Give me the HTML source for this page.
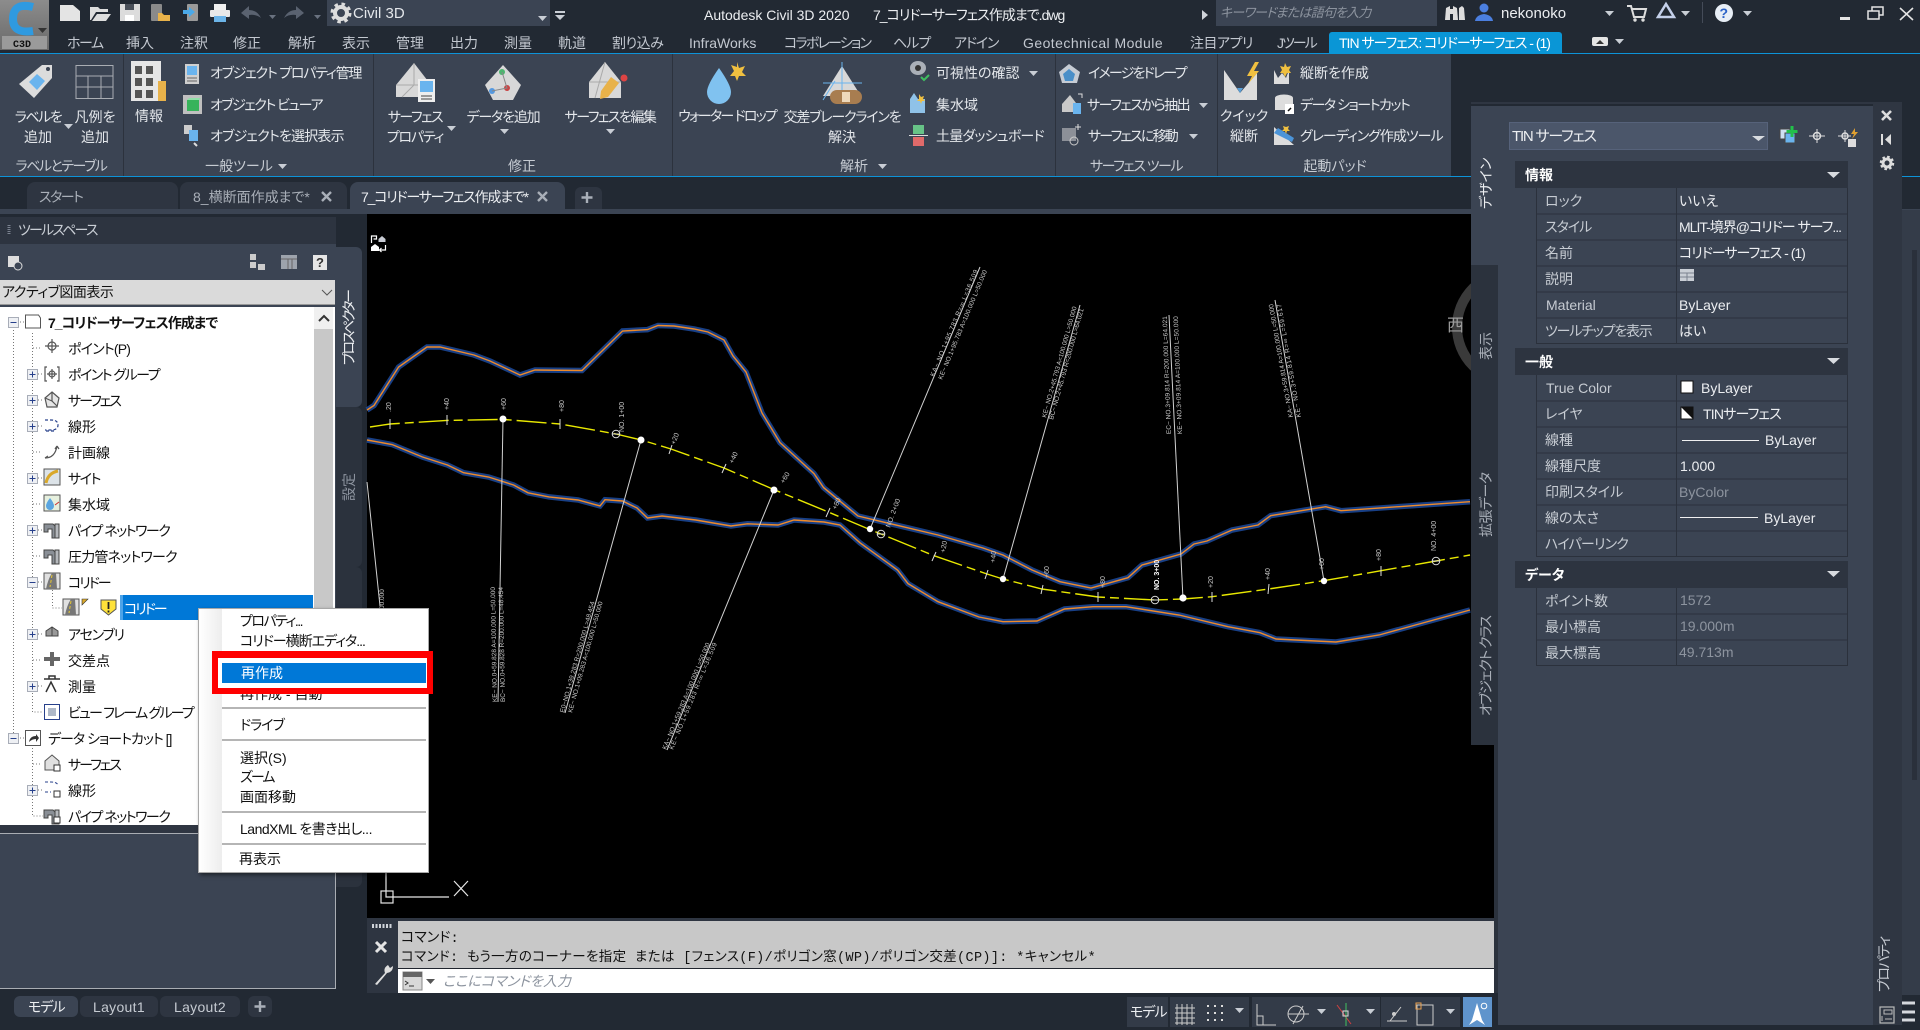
<!DOCTYPE html>
<html lang="ja"><head><meta charset="utf-8"><title>Autodesk Civil 3D 2020</title>
<style>
html,body{margin:0;padding:0;width:1920px;height:1030px;overflow:hidden;background:#222933}
body{position:relative;font-family:"Liberation Sans","Noto Sans CJK JP",sans-serif;font-feature-settings:"palt";font-size:14px;color:#e4e7eb}
div{position:absolute}
.t{position:absolute;white-space:nowrap;line-height:16px;height:16px}
.c{transform:translateX(-50%)}
.m{color:#c3c8d0}
.b{color:#111}
.g{color:#8d949f}
.l{color:#c6cbd2}
.w{color:#eceef1}
.r{transform-origin:0 0;transform:rotate(-90deg)}
.k05{letter-spacing:-.5px}
.k08{letter-spacing:-.8px}
.k1{letter-spacing:-1px}
.k12{letter-spacing:-1.2px}
.k15{letter-spacing:-1.5px}
.k18{letter-spacing:-1.8px}
.k2{letter-spacing:-2px}
svg{position:absolute;left:0;top:0}
</style></head><body>
<!-- base panels -->
<div style="left:0;top:53px;width:1451px;height:124px;background:#3b4453"></div>
<div style="left:0;top:53px;width:1920px;height:1px;background:#0d93d8"></div>
<div style="left:0;top:176px;width:1451px;height:1px;background:#0d93d8"></div>
<div style="left:1451px;top:176px;width:469px;height:1px;background:#0d93d8"></div>
<div style="left:0;top:209px;width:1920px;height:5px;background:#3b4453"></div>
<div style="left:27px;top:182px;width:151px;height:27px;background:#2e3541;border-radius:8px 8px 0 0"></div>
<div style="left:180px;top:182px;width:167px;height:27px;background:#2e3541;border-radius:8px 8px 0 0"></div>
<div style="left:350px;top:182px;width:215px;height:32px;background:#3b4453;border-radius:8px 8px 0 0"></div>
<div style="left:575px;top:187px;width:27px;height:22px;background:#2e3541;border-radius:6px 6px 0 0"></div>
<div style="left:0;top:214px;width:367px;height:780px;background:#222933"></div>
<!-- left panel -->
<div style="left:0;top:217px;width:336px;height:27px;background:#2d3440"></div>
<div style="left:0;top:244px;width:336px;height:744px;background:#3b4453"></div>
<div style="left:336px;top:247px;width:26px;height:160px;background:#3b4453;border-radius:0 6px 6px 0"></div>
<div style="left:336px;top:407px;width:26px;height:160px;background:#2b323d;border-radius:0 6px 6px 0"></div>
<div style="left:336px;top:567px;width:26px;height:320px;background:#2b323d;border-radius:0 6px 6px 0"></div>
<div style="left:0;top:280px;width:335px;height:24px;background:#dadada;border-bottom:1px solid #999"></div>
<div style="left:0;top:307px;width:335px;height:518px;background:#fff"></div>
<div style="left:314px;top:307px;width:19px;height:518px;background:#c8c8c8"></div>
<div style="left:314px;top:307px;width:19px;height:22px;background:#f0f0f0"></div>
<div style="left:0;top:825px;width:336px;height:8px;background:#2f3642"></div>
<div style="left:0;top:833px;width:335px;height:154px;border-top:1px solid #a9adb3;border-right:1px solid #a9adb3;border-bottom:1px solid #a9adb3"></div>
<div style="left:120px;top:595px;width:193px;height:25px;background:#0078d7"></div>
<!-- viewport -->
<div style="left:367px;top:214px;width:1127px;height:704px;background:#000"></div>
<svg width="1920" height="1030" viewBox="0 0 1920 1030" style="font-family:'Liberation Sans',sans-serif">
<defs>
<path id="a" fill="none" d="M367 410 374 405.5 398.6 367 427 347 440 347 474 355 490 361 520 375 535 370 582 370.5 622.5 331 647.5 329.6 658 325.5 674 326 694 329 708 332 724 340 733 356 746 372 762 413 780 442.6 814 473.6 823.6 487.6 858 516 938 535 983 548 1003 555 1032 570 1060 581.7 1091 588 1128 577.7 1142 565 1181 554 1194 544 1207 541 1232 530 1258 525 1270.6 515.7 1325.7 506.7 1341 510.7 1470 501.7"/>
<path id="b" fill="none" d="M367 440 392 444.5 422.5 457 447.5 465 463.6 472.7 488.6 477 513.6 485 528 492.8 549 496.9 578 500 600 505.9 605 499.7 622.5 501 637 508 647.5 518 662 516 695.7 520 731 526 747.5 523.8 778 525 794 520 824 522 840 525 860 542.8 897.5 570 908 583.6 938 601.7 979 617 1003 621.7 1037 621 1064.5 609 1093 606.7 1126 606.7 1179 615 1228 626.7 1260 632.7 1276 639 1336 642 1379 635 1470 610"/>
</defs>
<circle cx="1512" cy="327" r="55" fill="none" stroke="#3a3a3a" stroke-width="10"/>
<g stroke="#1c4a9c" stroke-width="5.500" stroke-opacity=".85"><use href="#a"/><use href="#b"/></g>
<g stroke="#f08a28" stroke-width="1.4"><use href="#a"/><use href="#b"/></g>
<g stroke="#d2d2d2" stroke-width="1" fill="none">
<path d="M367 482 380 606"/><path d="M503 419 498 702"/><path d="M641 440 565 713"/><path d="M774 490 667 750"/>
<path d="M870 529 980 267"/><path d="M1003 579 1080 305"/><path d="M1183 599 1169 315"/><path d="M1324 581 1275 300"/>
</g>
<path d="M370 427 390 424 447 420.4 503 419.4 560 424 616 434 641.4 440 671 449 724 468 774 489.6 829 512.3 870 529.6 881 534 934 555.7 987 574 1003 579 1042 589 1098 597 1155 600 1183 599 1212 596.7 1268.6 589 1323.7 580.7 1381 570.7 1436 561 1470 555" fill="none" stroke="#e8e800" stroke-width="1.4" stroke-dasharray="30 5 9 5"/>
<g stroke="#ddd" stroke-width="1">
<path d="M390 419v10M447 415v10M560 419v10M669 454l3-9M722 473l4-9M826 517l4-9M932 561l4-9M985 579l3-9M1041 594l2-9M1098 602v-10M1212 602v-10M1268 594l1-10M1381 576l0-10"/>
</g>
<g fill="#fff"><circle cx="503" cy="419" r="3.5"/><circle cx="641" cy="440" r="3.5"/><circle cx="774" cy="490" r="3.5"/><circle cx="870" cy="529" r="3.2"/><circle cx="1003" cy="579" r="3.2"/><circle cx="1183" cy="598" r="3.6"/><circle cx="1324" cy="581" r="3.2"/></g>
<g fill="none" stroke="#ddd"><circle cx="616" cy="434" r="3.8"/><path d="M612 434h8"/><circle cx="881" cy="534" r="3.8"/><path d="M877 534h8"/><circle cx="1155" cy="600" r="3.8"/><path d="M1151 600h8"/><circle cx="1436" cy="561" r="3.8"/><path d="M1432 561h8"/></g>
<g fill="#c9c9c9" font-size="7">
<text transform="rotate(-90 391 412)" x="391" y="412">.20</text>
<text transform="rotate(-90 449 410)" x="449" y="410">+40</text>
<text transform="rotate(-90 506 410)" x="506" y="410">+60</text>
<text transform="rotate(-90 564 412)" x="564" y="412">+80</text>
<text transform="rotate(-90 624 432)" x="624" y="432">NO. 1+00</text>
<text transform="rotate(-70 675 445)" x="675" y="445">+20</text>
<text transform="rotate(-65 733 464)" x="733" y="464">+40</text>
<text transform="rotate(-60 784 484)" x="784" y="484">+60</text>
<text transform="rotate(-65 836 510)" x="836" y="510">+80</text>
<text transform="rotate(-70 890 528)" x="890" y="528">NO. 2+00</text>
<text transform="rotate(-80 945 553)" x="945" y="553">+20</text>
<text transform="rotate(-85 995 563)" x="995" y="563">+40</text>
<text transform="rotate(-90 1049 578)" x="1049" y="578">+60</text>
<text transform="rotate(-90 1105 588)" x="1105" y="588">+80</text>
<text transform="rotate(-90 1213 588)" x="1213" y="588">+20</text>
<text transform="rotate(-90 1270 580)" x="1270" y="580">+40</text>
<text transform="rotate(-90 1324 570)" x="1324" y="570">+60</text>
<text transform="rotate(-90 1381 561)" x="1381" y="561">+80</text>
<text transform="rotate(-90 1436 551)" x="1436" y="551">NO. 4+00</text>
<text transform="rotate(-90 1159 590)" x="1159" y="590" fill="#fff" font-weight="bold">NO. 3+00</text>
<g font-size="6.5">
<text transform="rotate(-90 384 620)" x="384" y="620">L=100.000</text>
<text transform="rotate(-91 497 702)" x="497" y="702" textLength="115">KE~ NO.0+59.828 A=100.000 L=50.000</text>
<text transform="rotate(-91 505 702)" x="505" y="702" textLength="115">BC~ NO.0+59.828 R=200.000 L=48.454</text>
<text transform="rotate(-74.5 564 713)" x="564" y="713" textLength="115">E0~NO.1+39.283 R=200.000 L=48.454</text>
<text transform="rotate(-74.5 572 713)" x="572" y="713" textLength="115">KE~ NO.1+09.283 A=100.000 L=50.000</text>
<text transform="rotate(-67.5 666 750)" x="666" y="750" textLength="115">KA~ NO.1+59.283 A=100.000 L=50.000</text>
<text transform="rotate(-67.5 673 750)" x="673" y="750" textLength="115">KE~ NO.1+59.283 R=∞ L=36.509</text>
<text transform="rotate(-67.5 934 377)" x="934" y="377" textLength="115">KA~ NO.1+95.783 R=∞ L=36.509</text>
<text transform="rotate(-67.5 942 380)" x="942" y="380" textLength="118">KE~ NO.1+95.783 A=100.000 L=50.000</text>
<text transform="rotate(-74.5 1046 418)" x="1046" y="418" textLength="115">KE~ NO.2+45.793 A=100.000 L=50.000</text>
<text transform="rotate(-74.5 1053 420)" x="1053" y="420" textLength="115">BC~ NO.2+45.793 R=200.000 L=64.021</text>
<text transform="rotate(-92 1171 434)" x="1171" y="434" textLength="118">EC~ NO.3+09.814 R=200.000 L=64.021</text>
<text transform="rotate(-92 1182 434)" x="1182" y="434" textLength="118">KE~ NO.3+09.814 A=100.000 L=50.000</text>
<text transform="rotate(-100 1293 417)" x="1293" y="417" textLength="115">KA~ NO.3+59.814 A=100.000 L=50.000</text>
<text transform="rotate(-100 1301 417)" x="1301" y="417" textLength="115">KE~ NO.3+59.814 R=∞ L=59.617</text>
</g>
</g>
<!-- ucs -->
<g fill="none" stroke="#e6e6e6" stroke-width="1.2"><rect x="381" y="891" width="12" height="12"/><path d="M386 873V897H449M454 881l14 15M468 881l-14 15"/></g>
<!-- corner nav -->
<path d="M371.500 243v-7h5v3h-3" fill="none" stroke="#fff" stroke-width="1.200"/>
<path d="M382 236l3.500 3v3h-7v-3z" fill="#c8ccd4"/>
<path d="M371 251v-4l4-3 4 3v4z" fill="#fff"/>
<path d="M385.500 245v5h-6m2-2l-2 2 2 2" fill="none" stroke="#fff" stroke-width="1.200"/>
</svg>
<div class="t" style="left:1447px;top:316px;font-size:17px;line-height:20px;height:20px;color:#9c9c9c">西</div>
<!-- palette -->
<div style="left:1471px;top:102px;width:431px;height:2px;background:#2f3642"></div>
<div style="left:1873px;top:103px;width:29px;height:922px;background:#2f3642"></div>
<div style="left:1471px;top:106px;width:402px;height:159px;background:#3b4453"></div>
<div style="left:1498px;top:265px;width:375px;height:760px;background:#3b4453"></div>
<div style="left:1471px;top:265px;width:27px;height:160px;background:#2b323d"></div>
<div style="left:1471px;top:425px;width:27px;height:160px;background:#2b323d"></div>
<div style="left:1471px;top:585px;width:27px;height:160px;background:#2b323d"></div>
<div style="left:1494px;top:745px;width:4px;height:280px;background:#2b323d"></div>
<div style="left:1902px;top:210px;width:18px;height:785px;background:#343c49"></div>
<div style="left:1912px;top:250px;width:5px;height:530px;background:#2a303b"></div>
<div style="left:1509px;top:122px;width:259px;height:28px;background:#4b566a;box-shadow:inset 0 0 0 1px #56627a"></div>
<div style="left:1515px;top:161px;width:333px;height:27px;background:#2d3440"></div>
<div style="left:1515px;top:348px;width:333px;height:27px;background:#2d3440"></div>
<div style="left:1515px;top:561px;width:333px;height:27px;background:#2d3440"></div>
<!-- command -->
<div style="left:367px;top:918px;width:1127px;height:75px;background:#2e3541"></div>
<div style="left:398px;top:921px;width:1096px;height:47px;background:#c8c8c8"></div>
<div style="left:398px;top:968px;width:1096px;height:1px;background:#20252e"></div>
<div style="left:398px;top:969px;width:1096px;height:24px;background:#fff"></div>
<!-- status bar -->
<div style="left:0;top:993px;width:1498px;height:37px;background:#222933"></div>
<div style="left:14px;top:996px;width:64px;height:21px;background:#3b4453;border-radius:6px"></div>
<div style="left:80px;top:996px;width:78px;height:21px;background:#2e3541;border-radius:6px"></div>
<div style="left:160px;top:996px;width:80px;height:21px;background:#2e3541;border-radius:6px"></div>
<div style="left:248px;top:996px;width:24px;height:21px;background:#2e3541;border-radius:6px"></div>
<div style="left:1127px;top:997px;width:41px;height:30px;background:#333b48"></div>
<div style="left:1170px;top:997px;width:79px;height:30px;background:#333b48"></div>
<div style="left:1252px;top:997px;width:128px;height:30px;background:#333b48"></div>
<div style="left:1381px;top:997px;width:79px;height:30px;background:#333b48"></div>
<div style="left:1463px;top:997px;width:29px;height:30px;background:#5f94cc"></div>
<!-- top bars -->
<div style="left:327px;top:0;width:223px;height:26px;background:#3b4453"></div>
<div style="left:1216px;top:0;width:221px;height:26px;background:#3b4453"></div>
<div style="left:1329px;top:32px;width:233px;height:22px;background:#0a96d6;border-radius:3px 3px 0 0"></div>

<!-- TEXT: title -->
<div class="t" style="left:353px;top:6px;font-size:15px">Civil 3D</div>
<div class="t w" style="left:704px;top:7px">Autodesk Civil 3D 2020</div>
<div class="t w k1" style="left:873px;top:7px">7_コリドーサーフェス作成まで.dwg</div>
<div class="t g" style="left:1220px;top:5px;font-style:italic;font-size:13px;letter-spacing:-.8px">キーワードまたは語句を入力</div>
<div class="t w" style="left:1501px;top:6px;font-size:15px">nekonoko</div>
<!-- menu -->
<div class="t m k15" style="left:67px;top:35px">ホーム</div>
<div class="t m" style="left:126px;top:35px">挿入</div>
<div class="t m" style="left:180px;top:35px">注釈</div>
<div class="t m" style="left:233px;top:35px">修正</div>
<div class="t m" style="left:288px;top:35px">解析</div>
<div class="t m" style="left:342px;top:35px">表示</div>
<div class="t m" style="left:396px;top:35px">管理</div>
<div class="t m" style="left:450px;top:35px">出力</div>
<div class="t m" style="left:504px;top:35px">測量</div>
<div class="t m" style="left:558px;top:35px">軌道</div>
<div class="t m k05" style="left:612px;top:35px">割り込み</div>
<div class="t m" style="left:689px;top:35px">InfraWorks</div>
<div class="t m k18" style="left:784px;top:35px">コラボレーション</div>
<div class="t m k1" style="left:893px;top:35px">ヘルプ</div>
<div class="t m k12" style="left:954px;top:35px">アドイン</div>
<div class="t m" style="left:1023px;top:35px;letter-spacing:.45px">Geotechnical Module</div>
<div class="t m k05" style="left:1190px;top:35px">注目アプリ</div>
<div class="t m k2" style="left:1277px;top:35px">Jツール</div>
<div class="t k1" style="left:1339px;top:35px;color:#fff">TIN サーフェス: コリドーサーフェス - (1)</div>
<!-- ribbon labels -->
<div class="t c k15" style="left:38px;top:109px">ラベルを</div><div class="t c" style="left:38px;top:129px">追加</div>
<div class="t c" style="left:95px;top:109px">凡例を</div><div class="t c" style="left:95px;top:129px">追加</div>
<div class="t c" style="left:149px;top:108px">情報</div>
<div class="t k12" style="left:210px;top:65px">オブジェクト プロパティ管理</div>
<div class="t k15" style="left:210px;top:97px">オブジェクト ビューア</div>
<div class="t k08" style="left:210px;top:128px">オブジェクトを選択表示</div>
<div class="t c k15" style="left:415px;top:109px">サーフェス</div><div class="t c k12" style="left:415px;top:129px">プロパティ</div>
<div class="t c k12" style="left:503px;top:109px">データを追加</div>
<div class="t c k15" style="left:610px;top:109px">サーフェスを編集</div>
<div class="t c k18" style="left:727px;top:108px">ウォーター ドロップ</div>
<div class="t c k12" style="left:842px;top:109px">交差ブレークラインを</div><div class="t c" style="left:842px;top:129px">解決</div>
<div class="t" style="left:936px;top:65px">可視性の確認</div>
<div class="t" style="left:936px;top:97px">集水域</div>
<div class="t k08" style="left:936px;top:128px">土量ダッシュボード</div>
<div class="t k18" style="left:1088px;top:65px">イメージをドレープ</div>
<div class="t k15" style="left:1087px;top:97px">サーフェスから抽出</div>
<div class="t k18" style="left:1088px;top:128px">サーフェスに移動</div>
<div class="t c" style="left:1244px;top:108px">クイック</div><div class="t c" style="left:1244px;top:128px">縦断</div>
<div class="t" style="left:1300px;top:65px">縦断を作成</div>
<div class="t k15" style="left:1300px;top:97px">データ ショートカット</div>
<div class="t k1" style="left:1300px;top:128px">グレーディング作成ツール</div>
<div class="t c l k15" style="left:61px;top:158px">ラベルとテーブル</div>
<div class="t c l" style="left:239px;top:158px">一般ツール</div>
<div class="t c l" style="left:522px;top:158px">修正</div>
<div class="t c l" style="left:854px;top:158px">解析</div>
<div class="t c l k15" style="left:1136px;top:158px">サーフェス ツール</div>
<div class="t c l" style="left:1335px;top:158px">起動パッド</div>
<!-- doc tabs -->
<div class="t g k15" style="left:39px;top:189px;color:#a9afb8">スタート</div>
<div class="t g" style="left:193px;top:189px;color:#a9afb8">8_横断面作成まで*</div>
<div class="t w k12" style="left:361px;top:189px">7_コリドーサーフェス作成まで*</div>
<!-- left panel text -->
<div class="t k18" style="left:18px;top:222px;color:#c9ced5">ツールスペース</div>
<div class="t b k05" style="left:2px;top:284px">アクティブ図面表示</div>
<div style="left:0;top:1px">
<div class="t b k1" style="left:48px;top:314px;font-weight:bold">7_コリドーサーフェス作成まで</div>
<div class="t b k08" style="left:68px;top:340px">ポイント(P)</div>
<div class="t b k15" style="left:68px;top:366px">ポイント グループ</div>
<div class="t b k2" style="left:68px;top:392px">サーフェス</div>
<div class="t b" style="left:68px;top:418px">線形</div>
<div class="t b" style="left:68px;top:444px">計画線</div>
<div class="t b k15" style="left:68px;top:470px">サイト</div>
<div class="t b" style="left:68px;top:496px">集水域</div>
<div class="t b k15" style="left:68px;top:522px">パイプ ネットワーク</div>
<div class="t b k08" style="left:68px;top:548px">圧力管ネットワーク</div>
<div class="t b k2" style="left:68px;top:574px">コリドー</div>
<div class="t k2" style="left:124px;top:600px;color:#fff">コリドー</div>
<div class="t b k12" style="left:68px;top:626px">アセンブリ</div>
<div class="t b" style="left:68px;top:652px">交差点</div>
<div class="t b" style="left:68px;top:678px">測量</div>
<div class="t b k18" style="left:68px;top:704px">ビュー フレーム グループ</div>
<div class="t b k1" style="left:48px;top:730px">データ ショートカット []</div>
<div class="t b k2" style="left:68px;top:756px">サーフェス</div>
<div class="t b" style="left:68px;top:782px">線形</div>
<div class="t b k15" style="left:68px;top:808px">パイプ ネットワーク</div>
</div>
<div class="t r w" style="left:341px;top:365px;letter-spacing:-2.400px">プロスペクター</div>
<div class="t r g" style="left:341px;top:501px">設定</div>
<!-- palette text -->
<div class="t r w" style="left:1478px;top:209px">デザイン</div>
<div class="t r g" style="left:1478px;top:360px;color:#a9afb8">表示</div>
<div class="t r g k05" style="left:1478px;top:537px;color:#a9afb8">拡張データ</div>
<div class="t r g k15" style="left:1478px;top:716px;color:#a9afb8">オブジェクト クラス</div>
<div class="t r l k15" style="left:1876px;top:992px">プロパティ</div>
<div class="t w k12" style="left:1512px;top:129px;font-size:15px">TIN サーフェス</div>
<div class="t" style="left:1525px;top:167px;font-weight:bold;color:#fff">情報</div>
<div class="t" style="left:1525px;top:354px;font-weight:bold;color:#fff">一般</div>
<div class="t" style="left:1525px;top:567px;font-weight:bold;color:#fff">データ</div>
<div class="t l" style="left:1545px;top:193px">ロック</div><div class="t w" style="left:1679px;top:193px">いいえ</div>
<div class="t l k1" style="left:1545px;top:219px">スタイル</div><div class="t w k1" style="left:1679px;top:219px">MLIT-境界@コリドー サーフ...</div>
<div class="t l" style="left:1545px;top:245px">名前</div><div class="t w k1" style="left:1679px;top:245px">コリドーサーフェス - (1)</div>
<div class="t l" style="left:1545px;top:271px">説明</div>
<div class="t l" style="left:1546px;top:297px">Material</div><div class="t w" style="left:1679px;top:297px">ByLayer</div>
<div class="t l k12" style="left:1545px;top:323px">ツールチップを表示</div><div class="t w" style="left:1679px;top:323px">はい</div>
<div class="t l" style="left:1546px;top:380px">True Color</div><div class="t w" style="left:1701px;top:380px">ByLayer</div>
<div class="t l" style="left:1545px;top:406px">レイヤ</div><div class="t w k08" style="left:1703px;top:406px">TINサーフェス</div>
<div class="t l" style="left:1545px;top:432px">線種</div><div class="t w" style="left:1765px;top:432px">ByLayer</div>
<div class="t l" style="left:1545px;top:458px">線種尺度</div><div class="t w" style="left:1680px;top:458px">1.000</div>
<div class="t l" style="left:1545px;top:484px">印刷スタイル</div><div class="t g" style="left:1679px;top:484px">ByColor</div>
<div class="t l" style="left:1545px;top:510px">線の太さ</div><div class="t w" style="left:1764px;top:510px">ByLayer</div>
<div class="t l k08" style="left:1545px;top:536px">ハイパーリンク</div>
<div class="t l" style="left:1545px;top:593px">ポイント数</div><div class="t g" style="left:1680px;top:592px">1572</div>
<div class="t l" style="left:1545px;top:619px">最小標高</div><div class="t g" style="left:1680px;top:618px">19.000m</div>
<div class="t l" style="left:1545px;top:645px">最大標高</div><div class="t g" style="left:1679px;top:644px">49.713m</div>
<!-- command text -->
<div class="t b" style="left:401px;top:931px;font-family:'Liberation Mono','Noto Sans CJK JP',monospace">コマンド:</div>
<div class="t b" style="left:401px;top:951px;font-family:'Liberation Mono','Noto Sans CJK JP',monospace;font-size:13.5px;letter-spacing:.35px">コマンド: もう一方のコーナーを指定 または [フェンス(F)/ポリゴン窓(WP)/ポリゴン交差(CP)]: *キャンセル*</div>
<div class="t g" style="left:443px;top:973px;font-style:italic">ここにコマンドを入力</div>
<!-- status text -->
<div class="t w k1" style="left:28px;top:999px">モデル</div>
<div class="t l" style="left:93px;top:999px;letter-spacing:.3px">Layout1</div>
<div class="t l" style="left:174px;top:999px;letter-spacing:.3px">Layout2</div>
<div class="t w k1" style="left:1130px;top:1004px">モデル</div>

<!-- ICONS -->
<svg width="1920" height="1030" viewBox="0 0 1920 1030">
<defs>
<linearGradient id="lg" x1="0" y1="0" x2="0" y2="1"><stop offset="0" stop-color="#8c8c8c"/><stop offset="1" stop-color="#6a6a6a"/></linearGradient>
<g id="plus"><rect x="0.5" y="0.5" width="10" height="10" fill="#eef0f4" stroke="#a8adb8"/><path d="M2.5 5.5h6M5.5 2.5v6" stroke="#27408b"/></g>
<g id="minus"><rect x="0.5" y="0.5" width="10" height="10" fill="#eef0f4" stroke="#a8adb8"/><path d="M2.5 5.5h6" stroke="#27408b"/></g>
<path id="dn" d="M0 0h9l-4.5 5z" fill="#c9ced5"/>
<path id="dnw" d="M0 0h13l-6.5 6z" fill="#d8dbe0"/>
<g id="pipe" fill="#8a8f96" stroke="#444"><path d="M1 3h9l3 3v11h-4v-9h-4v3h-4z"/><path d="M12 3h4v14h-4z" fill="#b5b8bc"/></g>
</defs>
<!-- logo -->
<rect x="0" y="0" width="49" height="50" fill="url(#lg)"/>
<rect x="2" y="36" width="45" height="13" fill="#9a9a9a"/>
<path d="M33 7Q13 2 13 19Q13 34 33 31" fill="none" stroke="#2f9ae0" stroke-width="8"/>
<path d="M38 28h9l-4.5 5z" fill="#333"/>
<text x="13" y="47" font-family="Liberation Mono" font-size="10" font-weight="bold" fill="#111">C3D</text>
<!-- QAT -->
<path d="M60 5h13l7 6v10H60z" fill="#e4e4e4"/>
<path d="M90 20V7h8l2 2h8v3H96l-5 8z" fill="#ddd"/><path d="M92 21l5-7h14l-5 7z" fill="#ddd"/>
<rect x="120" y="4" width="20" height="17" fill="#dcdcdc"/><rect x="125" y="4" width="9" height="6" fill="#4a505a"/><rect x="125" y="15" width="9" height="6" fill="#fff"/>
<rect x="151" y="4" width="11" height="17" rx="1" fill="#8a8a8a"/><path d="M158 13h4l2 2h6v6h-12z" fill="#e8b24a"/>
<rect x="187" y="4" width="11" height="17" rx="1" fill="#9a9a9a"/><path d="M183 10h6v-3l6 5-6 5v-3h-6z" fill="#4aa8e8"/>
<rect x="214" y="4" width="12" height="6" fill="#f0f0f0"/><rect x="210" y="10" width="20" height="7" rx="1" fill="#e8e8e8"/><rect x="214" y="16" width="12" height="6" fill="#6cb4e8"/>
<path d="M241 13l8-7v4q8 0 12 8q-5-4-12-3v4z" fill="#5a6270"/>
<path d="M304 13l-8-7v4q-8 0-12 8q5-4 12-3v4z" fill="#5a6270"/>
<path d="M269 15h7l-3.5 4z M314 15h7l-3.5 4z" fill="#6a7280"/>
<circle cx="341" cy="13" r="6" fill="none" stroke="#ddd" stroke-width="4"/><circle cx="341" cy="13" r="9" fill="none" stroke="#ddd" stroke-width="3" stroke-dasharray="3.5 3.6"/>
<use href="#dn" x="538" y="16"/><path d="M555 11h10v2h-10zM555 15h10l-5 5z" fill="#c9ced5"/>
<path d="M1202 10l6 5-6 5z" fill="#d0d4da"/>
<!-- right title -->
<g fill="#ddd"><path d="M1446 8l4-2v3h3V6l4 2 1 12h-5v-6h-3v6h-5z"/><path d="M1459 8l3-2 2 2 1 12h-6z"/></g>
<circle cx="1484" cy="8" r="4.5" fill="#4b7fe0"/><path d="M1475 21q1-6 9-7q8 1 9 7z" fill="#4b7fe0"/>
<use href="#dn" x="1605" y="11"/>
<path d="M1627 6h4l3 11h10l2-8h-14" fill="none" stroke="#ddd" stroke-width="2"/><circle cx="1635" cy="20" r="1.7" fill="#ddd"/><circle cx="1643" cy="20" r="1.7" fill="#ddd"/>
<path d="M1666 4l8 13h-16z" fill="none" stroke="#c4d0ea" stroke-width="2.5"/><use href="#dn" x="1681" y="11"/>
<rect x="1702" y="2" width="1" height="21" fill="#444b58"/>
<circle cx="1724" cy="13" r="9" fill="#e8eef6"/><text x="1719.5" y="18" font-family="Liberation Sans" font-weight="bold" font-size="14" fill="#2a62c8">?</text>
<use href="#dn" x="1743" y="11"/>
<rect x="1840" y="17" width="10" height="3" fill="#e4e4e4"/>
<rect x="1868" y="11" width="11" height="8" fill="none" stroke="#e4e4e4" stroke-width="1.5"/><path d="M1872 11V7h11v8h-4" fill="none" stroke="#e4e4e4" stroke-width="1.5"/>
<path d="M1900 8l13 12M1913 8l-13 12" stroke="#e4e4e4" stroke-width="1.6"/>
<rect x="1592" y="37" width="16" height="9" rx="2" fill="#e4e4e4"/><path d="M1596 44l4-4 4 4z" fill="#333"/><use href="#dn" x="1615" y="39"/>
<!-- ribbon separators -->
<path d="M123.500 54V176M373.500 54V176M672.500 54V176M1055.500 54V176M1217.500 54V176" stroke="#2c323d"/>
<!-- ribbon icons -->
<path d="M19 84L42 65h10v13L34 98z" fill="#dcdcdc"/><path d="M37 74l8 7-8 9-8-8z" fill="#6ab4ee"/><circle cx="48" cy="69" r="2" fill="#3b4453"/>
<g fill="none" stroke="#a9adb3"><rect x="76" y="65.500" width="37" height="33"/><path d="M76 76h37M76 87h37M88 76v22M101 76v22"/></g>
<rect x="131" y="61" width="30" height="40" fill="#e6e6e6"/><path d="M135 66h7v8h-7zM146 66h7v8h-7zM135 78h7v8h-7zM146 78h7v8h-7zM135 90h7v8h-7zM146 90h7v8h-7z" fill="#555"/><path d="M158 81h8v20h-8z" fill="#e8b24a"/>
<rect x="185" y="64" width="14" height="20" fill="#cfcfcf"/><rect x="187" y="66" width="10" height="9" fill="#6ab4ee"/><path d="M187 78h10M187 81h10" stroke="#666"/>
<rect x="183" y="95" width="19" height="19" fill="#bfbfbf"/><path d="M187 100h12v11h-12z" fill="#37b35b"/><path d="M187 100l2-2h12l-2 2z" fill="#8fe0a8"/>
<path d="M184 125h8v9h-8z" fill="#ccc"/><path d="M189 130h9v11h-9z" fill="#6ab4ee"/><path d="M194 143l3 3" stroke="#ddd" stroke-width="2"/>
<path d="M396 97V85l18-22 17 22v12z" fill="#d8d8d8"/><path d="M396 85h35M414 63v22M414 85l-12 12" stroke="#aaa" fill="none"/><rect x="418" y="79" width="17" height="23" fill="#eee"/><rect x="420" y="81" width="13" height="11" fill="#6ab4ee"/><path d="M421 96h11M421 99h11" stroke="#444"/>
<path d="M503 65l18 20-8 15h-20l-8-15z" fill="#d8d8d8"/><circle cx="502" cy="72" r="3" fill="#4db56f"/><circle cx="492" cy="91" r="3" fill="#5599e0"/><circle cx="507" cy="88" r="3" fill="#c84545"/><path d="M502 72l5 16-15 3" stroke="#888" fill="none"/>
<path d="M605 62l16 20v16h-32V82z" fill="#d8d8d8"/><path d="M589 82h32M605 62l-10 36" stroke="#aaa" fill="none"/><path d="M612 88l8 6-11 14-8 2 1-8z" transform="translate(-1 -11)" fill="#e8b24a"/><circle cx="624" cy="78" r="3.5" fill="#d44"/>
<path d="M719 68q-12 17-12 24a12 12 0 0 0 24 0q0-7-12-24z" fill="#80c2f0"/><path d="M737 62l2 6 6-2-3 6 4 4-7 0-2 5-2-5-5 0 4-5-3-6 6 2z" fill="#f0c040"/>
<path d="M842 66l19 30h-38z" fill="#d8d8d8"/><path d="M823 83h39M842 62v36M823 100l12-19" stroke="#6ab4ee" fill="none"/><rect x="830" y="90" width="32" height="14" rx="7" fill="#a87d50"/><rect x="842" y="92" width="8" height="10" fill="#eed9bc"/>
<ellipse cx="918" cy="68" rx="8" ry="7" fill="#aab0b8"/><circle cx="918" cy="68" r="3" fill="#333"/><path d="M921 77l3 3 5-5" stroke="#3fbf60" stroke-width="2" fill="none"/>
<path d="M910 113v-14l4-6 4 6 7 0v14z" fill="#8fc2e8"/><path d="M919 94l2 3 3-1-1 3 2 2-3 0-1 3-1-3-3 0 2-2z" fill="#f0c040"/>
<rect x="913" y="125" width="11" height="9" fill="#67c387"/><rect x="909" y="135" width="19" height="1" fill="#ddd"/><rect x="913" y="137" width="11" height="9" fill="#e06a6a"/>
<path d="M1069 64l11 8-3 11h-15l-3-11z" fill="#c6ccd4"/><path d="M1069 69l6 5-2 7h-8l-2-7z" fill="#4a8fc8"/>
<path d="M1062 112V104l8-9 6 8-2 9z" fill="#c9c9c9"/><rect x="1073" y="103" width="8" height="11" fill="#6ab4ee"/><path d="M1078 94h4v4" stroke="#ddd" fill="none"/>
<rect x="1062" y="128" width="14" height="13" fill="#8c9098"/><circle cx="1074" cy="141" r="4" fill="none" stroke="#ccc"/><path d="M1078 124v6M1075 127h6" stroke="#ddd"/>
<path d="M1224 70l16 23 17-20v27h-33z" fill="#dcdcdc"/><path d="M1240 93l-3-5h6z" fill="#5aa0d8"/><path d="M1255 62l-8 14h5l-4 8 11-13h-5l5-9z" fill="#f0c040"/>
<path d="M1274 70l4 8 4-5 4 5 3-8v14h-15z" fill="#ddd"/><path d="M1285 63l2 4 4-1-2 4 2 3-4 0-2 4-2-4-3 0 2-3-2-4 4 1z" fill="#f0c040"/>
<ellipse cx="1284" cy="98" rx="9" ry="3.500" fill="#ddd"/><rect x="1275" y="98" width="18" height="12" fill="#ddd"/><rect x="1285" y="104" width="9" height="10" fill="#fff"/><path d="M1288 111l3-3" stroke="#111" stroke-width="1.5"/>
<path d="M1274 145v-18l20 18z" fill="#dcdcdc"/><path d="M1274 133l4-5 16 10-2 4z" fill="#4b94d8"/><path d="M1284 124l2 3 3-1-1 3 2 2-3 0-1 3-1-3-3 0 2-2-1-3 3 1z" fill="#f0c040"/>
<!-- ribbon carets -->
<use href="#dn" x="64" y="124"/><use href="#dn" x="447" y="126"/><use href="#dn" x="500" y="129"/><use href="#dn" x="606" y="129"/>
<use href="#dn" x="278" y="164"/><use href="#dn" x="878" y="164"/><use href="#dn" x="1029" y="71"/><use href="#dn" x="1199" y="103"/><use href="#dn" x="1189" y="134"/>
<!-- doc tabs -->
<path d="M322 192l9 9M331 192l-9 9M538 192l9 9M547 192l-9 9" stroke="#a9afb8" stroke-width="2.4"/>
<path d="M587 192v11M581.500 197.500h11" stroke="#a9afb8" stroke-width="2.4"/>
<!-- left panel icons -->
<path d="M9 225v10" stroke="#7a8290" stroke-width="3" stroke-dasharray="1 1"/>
<path d="M8 256h11v11H8z" fill="#ddd"/><circle cx="18" cy="266" r="4" fill="#3b4453" stroke="#ddd"/>
<path d="M250 254h6v6h-6zM250 262h6v6h-6zM258 264h7v6h-7z" fill="#ccc"/>
<rect x="281" y="255" width="16" height="14" fill="#9da3ac"/><path d="M281 259h16M288 259v10M292 259v10" stroke="#666"/>
<rect x="313" y="255" width="14" height="15" fill="#e6e6e6"/><text x="316" y="267" font-family="Liberation Sans" font-weight="bold" font-size="13" fill="#333">?</text>
<path d="M322 290l5 5 5-5" fill="none" stroke="#555"/>
<path d="M319 321l5-5 5 5" fill="none" stroke="#333" stroke-width="2"/>
<!-- tree lines -->
<g stroke="#777" stroke-dasharray="1 2" fill="none"><path d="M13.500 330V736M32.500 333V712H43M32.500 748V816H43M52.500 590V608H62"/>
<path d="M33 348h9M38 374h4M38 400h4M38 426h4M33 452h9M38 478h4M33 504h9M38 530h4M33 556h9M38 582h4M38 634h4M33 660h9M38 686h4M33 764h9M38 790h4M20 322h5M20 738h5"/></g>
<use href="#minus" x="8" y="317"/><use href="#minus" x="8" y="733"/>
<use href="#plus" x="27" y="369"/><use href="#plus" x="27" y="395"/><use href="#plus" x="27" y="421"/><use href="#plus" x="27" y="473"/><use href="#plus" x="27" y="525"/><use href="#minus" x="27" y="577"/><use href="#plus" x="27" y="629"/><use href="#plus" x="27" y="681"/><use href="#plus" x="27" y="785"/>
<!-- tree icons -->
<path d="M25.500 315h13l2 3v10h-15z" fill="#fff" stroke="#555"/>
<g fill="none" stroke="#555" stroke-width="1.2">
<circle cx="52" cy="346" r="4"/><path d="M52 339v14M45 346h14"/>
<path d="M47 367h-2v14h2M57 367h2v14h-2"/><circle cx="52" cy="374" r="3"/><path d="M52 369v10M47 374h10"/>
<path d="M52 392l7 6-2 9H47l-2-9z" fill="#e6e6e6"/><path d="M52 392v9l5 5M52 401l-7-3"/>
<path d="M45 420h6q7 0 7 5t-7 5h-6M46 431h8" stroke-dasharray="3 2" stroke="#27408b"/>
<path d="M45 458q10 0 12-12M57 446l-2 3M57 446l2 3M45 458l3-2"/>
</g>
<rect x="44" y="469" width="16" height="16" fill="#dce3e8" stroke="#555"/><path d="M46 483q2-10 12-12" stroke="#d9a82a" stroke-width="3" fill="none"/>
<rect x="44" y="495" width="16" height="16" fill="#e6f0de" stroke="#555"/><path d="M50 498q-4 5-4 8a4 4 0 0 0 8 0q0-3-4-8z" fill="#5aa5e0"/><path d="M55 505l4-3" stroke="#c33"/>
<use href="#pipe" x="43" y="521"/><use href="#pipe" x="43" y="547"/>
<rect x="44" y="573" width="16" height="16" fill="#e0e0e0" stroke="#555"/><path d="M46 589q2-10 6-16h4l1 16z" fill="#777"/><path d="M52 575l-2 12" stroke="#e8c830" stroke-dasharray="3 2"/>
<rect x="63" y="599" width="16" height="16" fill="#e0e0e0" stroke="#555"/><path d="M65 615q2-10 6-16h4l1 16z" fill="#777"/><path d="M71 601l-2 12" stroke="#e8c830" stroke-dasharray="3 2"/>
<path d="M82 599h6l-6 6z" fill="#d9a82a" stroke="#333" stroke-width=".6"/>
<path d="M101 600h15v9l-7.500 6-7.500-6z" fill="#ffe23a" stroke="#555"/><path d="M108.500 602v7M108.500 610.500v2" stroke="#222" stroke-width="1.800"/>
<path d="M120 595h3v25h-3z" fill="#4da3e8"/>
<path d="M46 636v-5l6-4 6 4v5zM52 627v9" fill="#999" stroke="#444"/>
<path d="M44 657h6v-5h4v5h6v4h-6v5h-4v-5h-6z" fill="#666"/>
<path d="M46 692l5-10 5 10M44 679h16M49 679v-3h6v3" fill="none" stroke="#333" stroke-width="1.5"/>
<rect x="44.500" y="704.500" width="15" height="15" fill="#fff" stroke="#27408b"/><rect x="48" y="708" width="8" height="8" fill="#aeb8c8"/>
<rect x="25.500" y="730.500" width="15" height="15" fill="#fff" stroke="#555"/><path d="M29 742q1-6 7-6v-2l3 4-3 4v-3q-4 0-7 3z" fill="#333"/>
<path d="M52 755l7 6v9H45v-9z" fill="#e0e0e0" stroke="#555"/><rect x="54" y="765" width="6" height="6" fill="#fff" stroke="#333"/>
<path d="M45 782h6q7 0 7 4M45 792h6" stroke="#27408b" stroke-dasharray="3 2" fill="none"/><rect x="54" y="791" width="6" height="6" fill="#fff" stroke="#333"/>
<use href="#pipe" x="43" y="807"/><rect x="54" y="817" width="6" height="6" fill="#fff" stroke="#333"/>
<!-- palette icons -->
<path d="M1755 134h13l-6.500 5z" fill="#d8dbe0" transform="translate(-3 2)"/>
<rect x="1780" y="129" width="10" height="10" fill="#cfe0f2" stroke="#444"/><rect x="1785" y="133" width="10" height="10" fill="#6ab4ee" stroke="#444"/><path d="M1792 126v11M1786.500 131.500h11" stroke="#22c04a" stroke-width="3"/>
<circle cx="1817" cy="136" r="3.500" fill="none" stroke="#ddd" stroke-width="1.500"/><path d="M1817 129v14M1809 136h16" stroke="#ddd"/>
<circle cx="1845" cy="136" r="3" fill="none" stroke="#ddd" stroke-width="1.500"/><path d="M1845 130v12M1838 136h13" stroke="#ddd"/><path d="M1855 128l-4 6h3l-2 5 6-7h-3z" fill="#e0a030"/><rect x="1848" y="139" width="8" height="8" fill="#ddd"/>
<use href="#dnw" x="1827" y="172"/><use href="#dnw" x="1827" y="358"/><use href="#dnw" x="1827" y="571"/>
<path d="M1882 111l9 9M1891 111l-9 9" stroke="#ddd" stroke-width="2.600"/>
<path d="M1882 134v11" stroke="#ddd" stroke-width="2"/><path d="M1891 134v11l-6-5.500z" fill="#ddd"/>
<circle cx="1887" cy="163" r="4" fill="none" stroke="#ddd" stroke-width="3"/><circle cx="1887" cy="163" r="6" fill="none" stroke="#ddd" stroke-width="2.500" stroke-dasharray="2.500 2.200"/>
<g stroke="#2b313c" fill="none">
<path d="M1536.500 188V344M1676.500 188V344M1847.500 188V344M1536 214h312M1536 240h312M1536 266h312M1536 292h312M1536 318h312M1536 343.500h312"/>
<path d="M1536.500 375V557M1676.500 375V557M1847.500 375V557M1536 401h312M1536 427h312M1536 453h312M1536 479h312M1536 505h312M1536 531h312M1536 556.500h312"/>
<path d="M1536.500 588V665M1676.500 588V665M1847.500 588V665M1536 614h312M1536 640h312M1536 665.500h312"/>
</g>
<rect x="1680" y="269" width="14" height="12" fill="#c9ced5"/><path d="M1680 273h14M1680 277h14M1687 273v8" stroke="#7a8290"/>
<rect x="1681" y="381" width="12" height="12" fill="#fff" stroke="#111"/>
<rect x="1681" y="407" width="12" height="12" fill="#fff" stroke="#111"/><path d="M1681 407l12 12h-12z" fill="#111" transform="rotate(180 1687 413)"/>
<path d="M1682 440.500h77M1680 517.500h78" stroke="#f0f0f0"/>
<!-- cmd icons -->
<path d="M372 926h21" stroke="#cfd3d9" stroke-width="4" stroke-dasharray="2 1.500"/>
<path d="M376 942l10 10M386 942l-10 10" stroke="#e4e4e4" stroke-width="3"/>
<path d="M375 984l10-11q-2-5 3-8l2 3 3-2q0 6-6 7l-10 12z" fill="#ddd"/>
<rect x="403" y="972" width="19" height="18" fill="#d8d8d8" stroke="#888"/><rect x="403" y="972" width="19" height="5" fill="#666"/><path d="M405 981l3 2-3 2M409 986h5" stroke="#333" fill="none"/>
<path d="M426 979h9l-4.500 5z" fill="#555"/>
<!-- status -->
<path d="M260 1001v11M254.500 1006.500h11" stroke="#a9afb8" stroke-width="2.400"/>
<g stroke="#ccc" fill="none"><path d="M1177 1004v21M1182 1004v21M1187 1004v21M1192 1004v21M1175 1008h20M1175 1013h20M1175 1018h20M1175 1023h20"/>
<path d="M1257 1004v21h19M1257 1016h6v9"/><circle cx="1296" cy="1014" r="8"/><path d="M1288 1014h21M1293 1024l10-18"/>
<path d="M1387 1021h20M1390 1021l11-14"/>
<rect x="1417" y="1005" width="16" height="20"/></g>
<path d="M1207 1005h2v2h-2zM1214 1005h2v2h-2zM1221 1005h2v2h-2zM1207 1012h2v2h-2zM1214 1012h2v2h-2zM1221 1012h2v2h-2zM1207 1019h2v2h-2zM1214 1019h2v2h-2zM1221 1019h2v2h-2z" fill="#ddd"/>
<use href="#dn" x="1235" y="1008"/><use href="#dn" x="1317" y="1009"/><use href="#dn" x="1366" y="1009"/><use href="#dn" x="1446" y="1009"/>
<path d="M1337 1005l14 19" stroke="#d04040"/><path d="M1346 1003v23" stroke="#40c060"/><rect x="1343" y="1011" width="5" height="5" fill="none" stroke="#ddd"/>
<rect x="1416" y="1003" width="5" height="6" fill="none" stroke="#e8a050"/><circle cx="1394" cy="1014" r="2" fill="#ccc"/>
<path d="M1477 1003l5 17 3 5-8-5-8 5 3-5z" fill="#fff"/><circle cx="1484" cy="1006" r="2.800" fill="none" stroke="#fff"/>
<rect x="1880" y="1007" width="14" height="16" fill="none" stroke="#bbb" stroke-width="1.200"/><rect x="1884" y="1010" width="8" height="4" fill="none" stroke="#bbb"/><path d="M1882 1016v5M1885 1019h7" stroke="#bbb"/>
<path d="M1902 1003h13M1902 1012h13M1902 1020h13" stroke="#d5d8dd" stroke-width="3"/>
</svg>

<!-- context menu -->
<div style="left:198px;top:608px;width:231px;height:265px;background:#fff;border:1px solid #a8a8a8;box-sizing:border-box;box-shadow:2px 2px 4px rgba(0,0,0,.5)"></div>
<div style="left:199px;top:609px;width:23px;height:263px;background:linear-gradient(90deg,#fff,#ededed)"></div>
<div style="left:222px;top:707px;width:204px;height:2px;background:#b5b5b5"></div>
<div style="left:222px;top:739px;width:204px;height:2px;background:#b5b5b5"></div>
<div style="left:222px;top:811px;width:204px;height:2px;background:#b5b5b5"></div>
<div style="left:222px;top:843px;width:204px;height:2px;background:#b5b5b5"></div>
<div class="t b k15" style="left:240px;top:613px">プロパティ...</div>
<div class="t b k1" style="left:240px;top:633px">コリドー横断エディタ...</div>
<div class="t b" style="left:240px;top:686px">再作成 - 自動</div>
<div class="t b k1" style="left:240px;top:717px">ドライブ</div>
<div class="t b" style="left:240px;top:750px">選択(S)</div>
<div class="t b k2" style="left:240px;top:769px">ズーム</div>
<div class="t b" style="left:240px;top:789px">画面移動</div>
<div class="t b k05" style="left:240px;top:821px">LandXML を書き出し...</div>
<div class="t b" style="left:239px;top:851px">再表示</div>
<div style="left:218px;top:658px;width:209px;height:30px;background:#fff"></div>
<div style="left:222px;top:663px;width:204px;height:20px;background:#0078d7"></div>
<div class="t" style="left:241px;top:665px;color:#fff">再作成</div>
<div style="left:212px;top:651px;width:221px;height:43px;border:solid #f00;border-width:7px 6px 6px 6px;box-sizing:border-box"></div>
</body></html>
